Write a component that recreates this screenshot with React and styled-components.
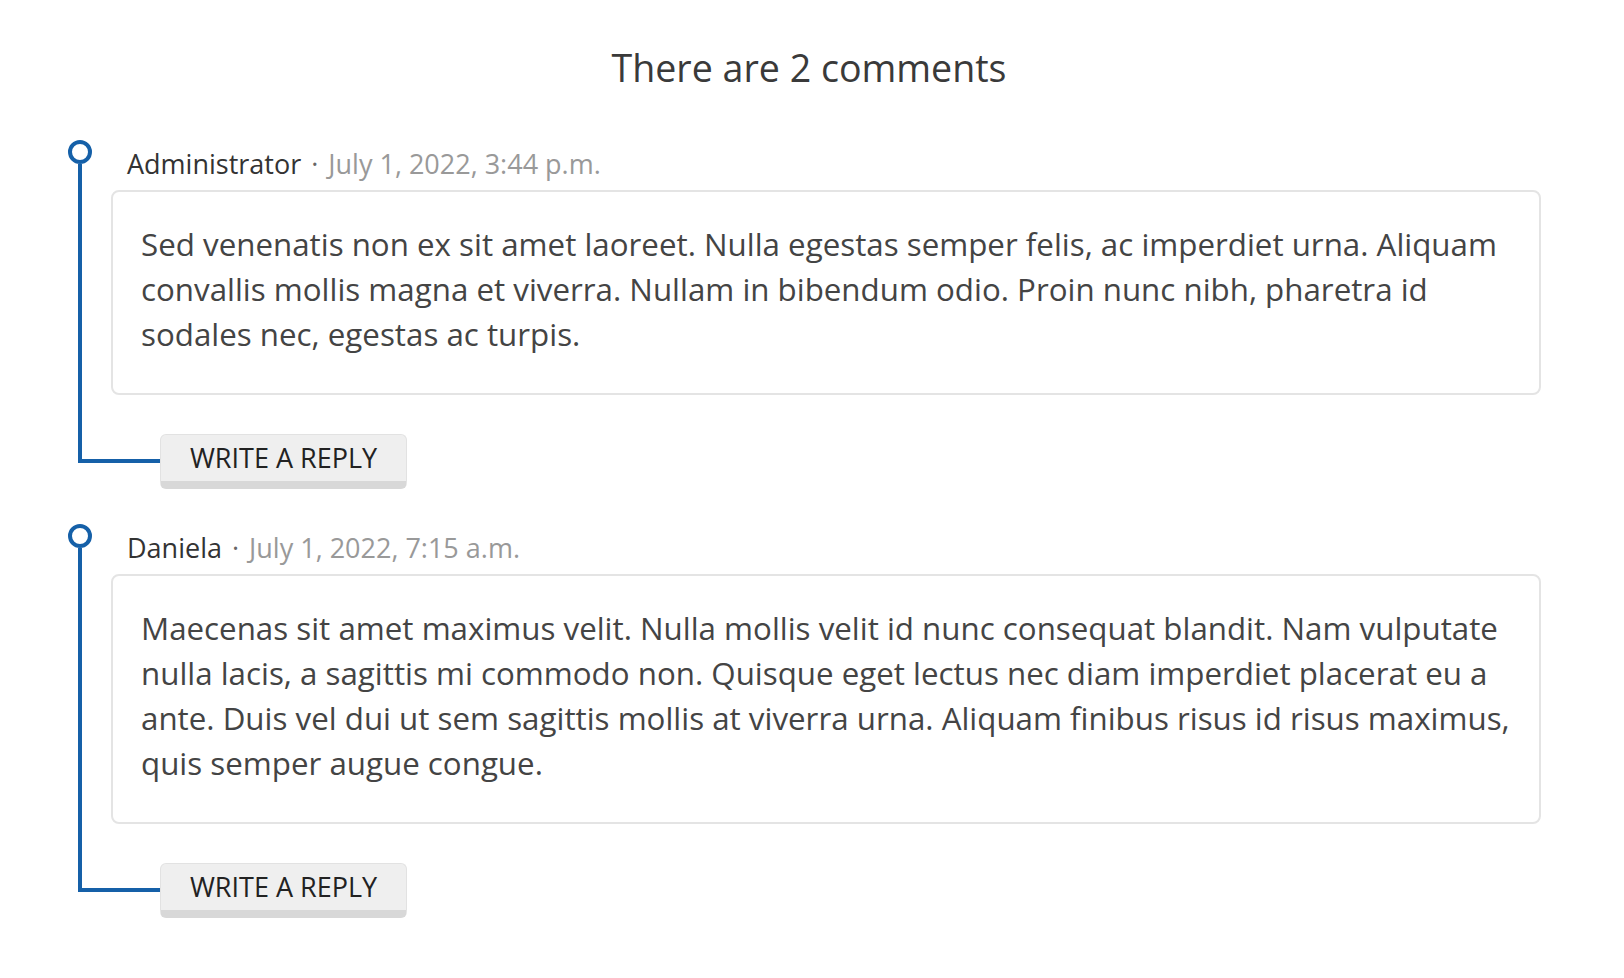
import React from 'react';
import styled, { createGlobalStyle } from 'styled-components';

const GlobalStyle = createGlobalStyle`
  body {
    margin: 0;
    background: #fff;
    font-family: 'Open Sans', 'Noto Sans', sans-serif;
    color: #444;
  }
`;

const comments = [
  {
    author: 'Administrator',
    date: 'July 1, 2022, 3:44 p.m.',
    body: 'Sed venenatis non ex sit amet laoreet. Nulla egestas semper felis, ac imperdiet urna. Aliquam convallis mollis magna et viverra. Nullam in bibendum odio. Proin nunc nibh, pharetra id sodales nec, egestas ac turpis.',
  },
  {
    author: 'Daniela',
    date: 'July 1, 2022, 7:15 a.m.',
    body: 'Maecenas sit amet maximus velit. Nulla mollis velit id nunc consequat blandit. Nam vulputate nulla lacis, a sagittis mi commodo non. Quisque eget lectus nec diam imperdiet placerat eu a ante. Duis vel dui ut sem sagittis mollis at viverra urna. Aliquam finibus risus id risus maximus, quis semper augue congue.',
  },
];

const Page = styled.div`
  padding: 44px 83px 40px 68px;
`;

const Title = styled.h2`
  margin: 0 0 47px;
  padding-left: 9px;
  text-align: center;
  font-size: 37.6px;
  line-height: 1.3;
  font-weight: 400;
  color: #3a3a3a;
`;

const List = styled.div`
  display: flex;
  flex-direction: column;
  gap: 35px;
`;

const Comment = styled.div`
  display: flex;
`;

const Rail = styled.div`
  width: 43px;
  flex-shrink: 0;
  display: flex;
  flex-direction: column;
  padding-bottom: 26px;
`;

const Dot = styled.span`
  width: 24px;
  height: 24px;
  box-sizing: border-box;
  border: 4px solid #1560a8;
  border-radius: 50%;
`;

const Stem = styled.span`
  flex: 1;
  margin-left: 10px;
  margin-right: -49px;
  border-left: 4px solid #1560a8;
  border-bottom: 4px solid #1560a8;
`;

const Body = styled.div`
  flex: 1;
  display: flex;
  flex-direction: column;
`;

const Meta = styled.div`
  padding: 4px 0 0 16px;
  margin-bottom: 7px;
  font-size: 27px;
  line-height: 39px;
  color: #333;
`;

const Sep = styled.span`
  color: #666;
  margin: 0 10px;
`;

const Date = styled.span`
  color: #999;
`;

const Card = styled.div`
  border: 2px solid #e4e4e4;
  border-radius: 8px;
  padding: 30px 28px 36px;
  font-size: 31.3px;
  line-height: 45px;
  color: #444;
`;

const ReplyRow = styled.div`
  display: flex;
  margin-top: 39px;
  padding-left: 49px;
`;

const ReplyButton = styled.button`
  width: 247px;
  height: 55px;
  box-sizing: border-box;
  border: 1px solid #e2e2e2;
  border-bottom: 8px solid #d8d8d8;
  border-radius: 6px;
  background: #efefef;
  font-family: 'Open Sans', 'Noto Sans', sans-serif;
  font-size: 27px;
  color: #222;
  padding: 0;
  cursor: pointer;
`;

export default function App() {
  return (
    <Page>
      <GlobalStyle />
      <Title>There are {comments.length} comments</Title>
      <List>
        {comments.map((c) => (
          <Comment key={c.author}>
            <Rail>
              <Dot />
              <Stem />
            </Rail>
            <Body>
              <Meta>
                {c.author}
                <Sep>·</Sep>
                <Date>{c.date}</Date>
              </Meta>
              <Card>{c.body}</Card>
              <ReplyRow>
                <ReplyButton type="button">WRITE A REPLY</ReplyButton>
              </ReplyRow>
            </Body>
          </Comment>
        ))}
      </List>
    </Page>
  );
}
